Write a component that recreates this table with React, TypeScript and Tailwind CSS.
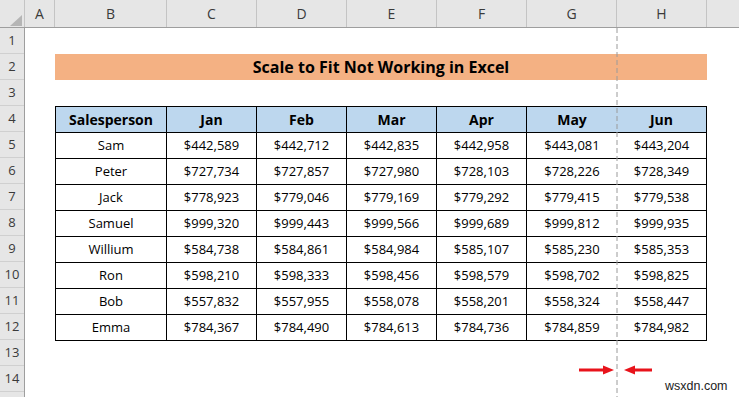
import React from "react";

const data: [string, string[]][] = [
  ["Sam", ["$442,589", "$442,712", "$442,835", "$442,958", "$443,081", "$443,204"]],
  ["Peter", ["$727,734", "$727,857", "$727,980", "$728,103", "$728,226", "$728,349"]],
  ["Jack", ["$778,923", "$779,046", "$779,169", "$779,292", "$779,415", "$779,538"]],
  ["Samuel", ["$999,320", "$999,443", "$999,566", "$999,689", "$999,812", "$999,935"]],
  ["Willium", ["$584,738", "$584,861", "$584,984", "$585,107", "$585,230", "$585,353"]],
  ["Ron", ["$598,210", "$598,333", "$598,456", "$598,579", "$598,702", "$598,825"]],
  ["Bob", ["$557,832", "$557,955", "$558,078", "$558,201", "$558,324", "$558,447"]],
  ["Emma", ["$784,367", "$784,490", "$784,613", "$784,736", "$784,859", "$784,982"]],
];

const months = ["Jan", "Feb", "Mar", "Apr", "May", "Jun"];

const colHeaders: { l: string; w: string }[] = [
  { l: "A", w: "w-[30px]" },
  { l: "B", w: "w-[112px]" },
  { l: "C", w: "w-[90px]" },
  { l: "D", w: "w-[90px]" },
  { l: "E", w: "w-[90px]" },
  { l: "F", w: "w-[90px]" },
  { l: "G", w: "w-[90px]" },
  { l: "H", w: "w-[90px]" },
];

function Cell({ i, children, head }: { i: number; children: React.ReactNode; head?: boolean }) {
  const w = i === 0 ? "w-[111px]" : "w-[90px]";
  const br = i === 5 ? "" : "border-r border-black";
  return (
    <div
      className={`${w} ${br} shrink-0 h-full flex items-center justify-center ${
        head ? "font-bold text-[14px]" : "text-[13px]"
      } text-black`}
    >
      {children}
    </div>
  );
}

export default function App() {
  return (
    <div className="relative w-[739px] h-[397px] overflow-hidden bg-white font-['Open_Sans',sans-serif]">
      {/* Column headers */}
      <div className="flex h-[28px] bg-[#e6e6e6] border-b border-[#9e9e9e]">
        <div className="relative w-[25px] shrink-0 border-r border-[#c4c4c4]">
          <svg className="absolute left-[10px] top-[15px]" width="12" height="11" viewBox="0 0 12 11">
            <polygon points="12,0 12,11 0,11" fill="#b5b5b5" />
          </svg>
        </div>
        {colHeaders.map((c) => (
          <div
            key={c.l}
            className={`${c.w} shrink-0 flex items-center justify-center border-r border-[#c4c4c4] text-[14px] text-[#3a3a3a]`}
          >
            {c.l}
          </div>
        ))}
        <div className="flex-1" />
      </div>

      <div className="flex">
        {/* Row headers */}
        <div className="w-[25px] shrink-0 bg-[#e6e6e6] border-r border-[#9e9e9e]">
          {Array.from({ length: 15 }, (_, i) => i + 1).map((n) => (
            <div
              key={n}
              className="h-[26px] border-b border-[#d0d0d0] flex items-center justify-center text-[13px] text-[#3a3a3a]"
            >
              {n <= 14 ? n : ""}
            </div>
          ))}
        </div>

        {/* Sheet content */}
        <div className="flex flex-col pl-[30px]">
          <div className="h-[26px]" />
          <div className="h-[26px] w-[652px] bg-[#f4b183] flex items-center justify-center font-bold text-[16px] text-black">
            Scale to Fit Not Working in Excel
          </div>
          <div className="h-[26px]" />
          <div className="w-[652px] border-t border-l border-black">
            <div className="flex h-[26px] border-b border-black bg-[#bdd7ee]">
              <Cell i={0} head>
                Salesperson
              </Cell>
              {months.map((m, k) => (
                <Cell key={m} i={k + 1} head>
                  {m}
                </Cell>
              ))}
            </div>
            {data.map(([name, vals]) => (
              <div key={name} className="flex h-[26px] border-b border-black">
                <Cell i={0}>{name}</Cell>
                {vals.map((v, k) => (
                  <Cell key={k} i={k + 1}>
                    {v}
                  </Cell>
                ))}
              </div>
            ))}
          </div>
        </div>
      </div>

      {/* Page break line */}
      <svg className="absolute left-[616px] top-[28px]" width="2" height="369">
        <line x1="1" y1="0" x2="1" y2="369" stroke="#9a9a9a" strokeWidth="1" strokeDasharray="5 3" />
      </svg>

      {/* Red arrows */}
      <svg className="absolute left-[576px] top-[362px]" width="80" height="16" viewBox="0 0 80 16">
        <line x1="3" y1="8" x2="29" y2="8" stroke="#e8131b" strokeWidth="3" />
        <polygon points="27,3.5 38,8 27,12.5" fill="#e8131b" />
        <polygon points="48,8 59,3.5 59,12.5" fill="#e8131b" />
        <line x1="57" y1="8" x2="76" y2="8" stroke="#e8131b" strokeWidth="3" />
      </svg>

      {/* Watermark */}
      <div className="absolute left-[665px] top-[378px] text-[12.5px] leading-[16px] text-[#222] font-['Liberation_Sans',sans-serif]">
        wsxdn.com
      </div>
    </div>
  );
}
